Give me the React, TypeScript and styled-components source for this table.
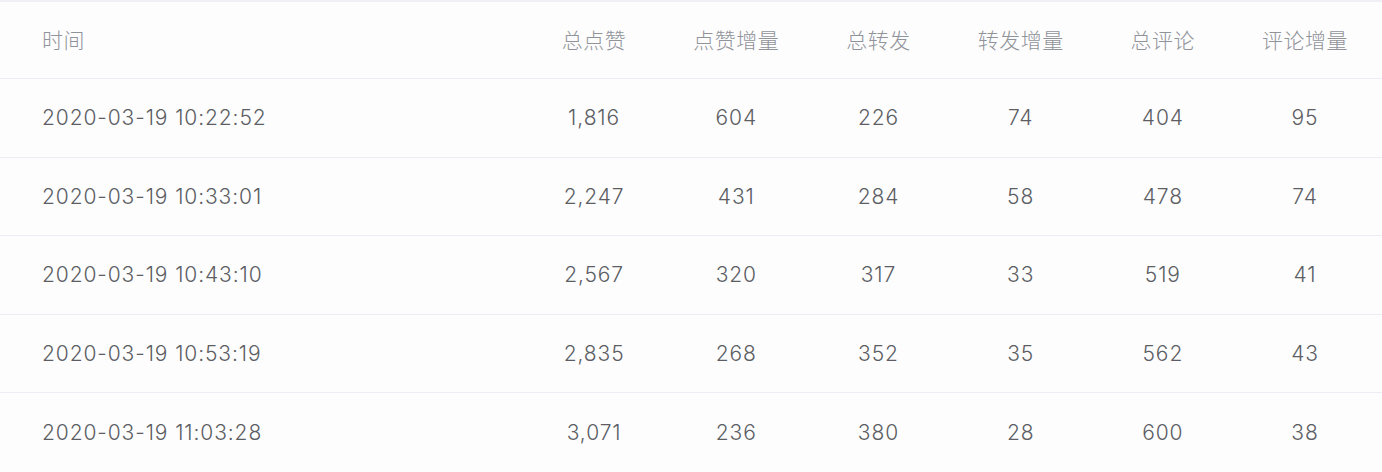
import React from "react";
import styled, { createGlobalStyle } from "styled-components";

const Global = createGlobalStyle`
  html, body { margin: 0; padding: 0; background: #fdfdfe; }
  body { font-family: Inter, "Noto Sans CJK SC", sans-serif; }
`;

const Table = styled.div`
  width: 1382px;
  border-top: 2px solid #eef0f6;
  background: #fdfdfe;
  box-sizing: border-box;
`;

const Row = styled.div<{ $header?: boolean }>`
  display: grid;
  grid-template-columns: 523px repeat(6, 142.2px);
  box-sizing: border-box;
  height: ${(p) => (p.$header ? "77px" : "78.5px")};
  padding-bottom: ${(p) => (p.$header ? "3px" : "0")};
  border-bottom: 1px solid #ebeef5;
  align-items: center;
  color: ${(p) => (p.$header ? "#909399" : "#5c5e63")};
  font-size: 21px;
  font-weight: 300;
  letter-spacing: ${(p) => (p.$header ? "0.5px" : "0.9px")};
  &:last-child { border-bottom: none; }
`;

const Cell = styled.div<{ $left?: boolean }>`
  text-align: ${(p) => (p.$left ? "left" : "center")};
  padding-left: ${(p) => (p.$left ? "42px" : "0")};
  white-space: nowrap;
`;

const headers = ["时间", "总点赞", "点赞增量", "总转发", "转发增量", "总评论", "评论增量"];
const rows = [
  ["2020-03-19 10:22:52", "1,816", "604", "226", "74", "404", "95"],
  ["2020-03-19 10:33:01", "2,247", "431", "284", "58", "478", "74"],
  ["2020-03-19 10:43:10", "2,567", "320", "317", "33", "519", "41"],
  ["2020-03-19 10:53:19", "2,835", "268", "352", "35", "562", "43"],
  ["2020-03-19 11:03:28", "3,071", "236", "380", "28", "600", "38"],
];

export default function App() {
  return (
    <>
      <Global />
      <Table>
        <Row $header>
          {headers.map((h, i) => (
            <Cell key={h} $left={i === 0}>{h}</Cell>
          ))}
        </Row>
        {rows.map((r) => (
          <Row key={r[0]}>
            {r.map((c, i) => (
              <Cell key={i} $left={i === 0}>{c}</Cell>
            ))}
          </Row>
        ))}
      </Table>
    </>
  );
}
